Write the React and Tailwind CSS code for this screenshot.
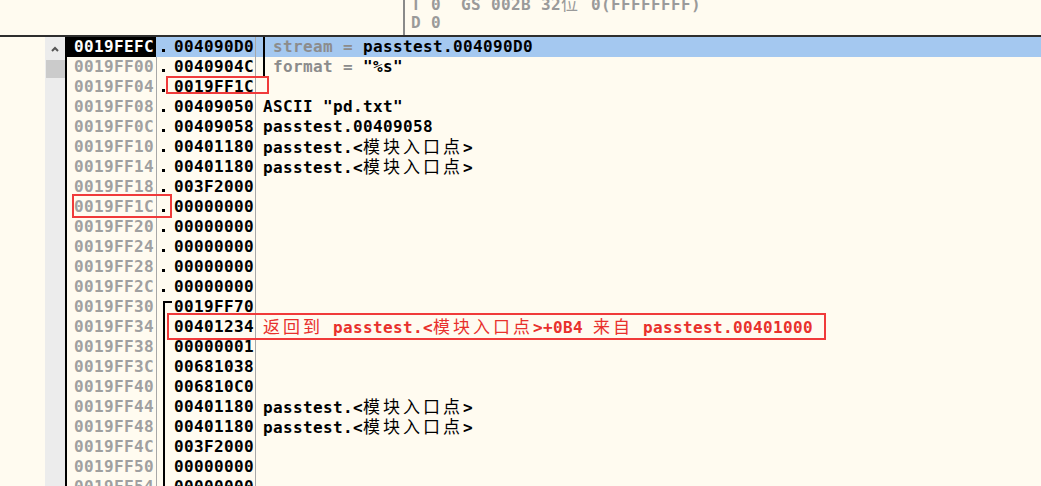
import React from 'react';

const rows = [
  { addr: '0019FEFC', val: '004090D0', mark: 'dot', sel: true, arg: true, label: 'stream = ', text: 'passtest.004090D0' },
  { addr: '0019FF00', val: '0040904C', mark: 'dot', arg: true, label: 'format = ', text: '"%s"' },
  { addr: '0019FF04', val: '0019FF1C', mark: 'dot' },
  { addr: '0019FF08', val: '00409050', mark: 'dot', text: 'ASCII "pd.txt"' },
  { addr: '0019FF0C', val: '00409058', mark: 'dot', text: 'passtest.00409058' },
  { addr: '0019FF10', val: '00401180', mark: 'dot', text: 'passtest.<模块入口点>' },
  { addr: '0019FF14', val: '00401180', mark: 'dot', text: 'passtest.<模块入口点>' },
  { addr: '0019FF18', val: '003F2000', mark: 'dot' },
  { addr: '0019FF1C', val: '00000000', mark: 'dot' },
  { addr: '0019FF20', val: '00000000', mark: 'dot' },
  { addr: '0019FF24', val: '00000000', mark: 'dot' },
  { addr: '0019FF28', val: '00000000', mark: 'dot' },
  { addr: '0019FF2C', val: '00000000', mark: 'dot' },
  { addr: '0019FF30', val: '0019FF70', mark: 'corner' },
  { addr: '0019FF34', val: '00401234', mark: 'line', red: true, text: '返回到 passtest.<模块入口点>+0B4 来自 passtest.00401000' },
  { addr: '0019FF38', val: '00000001', mark: 'line' },
  { addr: '0019FF3C', val: '00681038', mark: 'line' },
  { addr: '0019FF40', val: '006810C0', mark: 'line' },
  { addr: '0019FF44', val: '00401180', mark: 'line', text: 'passtest.<模块入口点>' },
  { addr: '0019FF48', val: '00401180', mark: 'line', text: 'passtest.<模块入口点>' },
  { addr: '0019FF4C', val: '003F2000', mark: 'line' },
  { addr: '0019FF50', val: '00000000', mark: 'line' },
  { addr: '0019FF54', val: '00000000', mark: 'line' },
];

// wrap runs of CJK so they get the wide 20px cell like the original
function Txt({ s }) {
  return s.split(/([\u4e00-\u9fff]+)/).map((part, i) =>
    /[\u4e00-\u9fff]/.test(part) ? (
      <span key={i} className="font-['Noto_Sans_CJK_SC',sans-serif] font-normal text-[17px] tracking-[3px]">
        {part}
      </span>
    ) : (
      part
    )
  );
}

function Marker({ type }) {
  if (type === 'dot') return <span className="ml-[5px] mt-[12px] w-[3px] h-[3px] bg-black" />;
  if (type === 'corner') return <div className="ml-[6px] mt-[4px] w-[9px] border-l-2 border-t-2 border-black" />;
  return <div className="ml-[6px] h-full border-l-2 border-black" />;
}

function Row({ r }) {
  return (
    <div className={`flex h-[20px] ${r.sel ? 'bg-[#a4c8f0]' : ''}`}>
      <div
        className={`w-[90px] shrink-0 pl-[7px] flex items-center border-r ${
          r.sel ? 'bg-black text-white border-[#a4c8f0]' : 'text-[#a0a0a0] border-[#a8a8a8]'
        }`}
      >
        {r.addr}
      </div>
      <div className="w-[99px] shrink-0 flex border-r border-[#a8a8a8]">
        <div className="w-[17px] h-full shrink-0 flex">
          <Marker type={r.mark} />
        </div>
        <div className="flex items-center text-black">{r.val}</div>
      </div>
      <div className={`flex-1 flex items-center whitespace-pre ${r.red ? 'text-[#e8302c]' : 'text-black'}`}>
        {r.arg ? (
          <>
            <div className="ml-[7px] w-[2px] h-full bg-black" />
            <span className="ml-[8px]">
              <span className="text-[#8c8c8c]">{r.label}</span>
              {r.text}
            </span>
          </>
        ) : (
          r.text && (
            <span className="ml-[7px]">
              <Txt s={r.text} />
            </span>
          )
        )}
      </div>
    </div>
  );
}

export default function App() {
  return (
    <div className="w-[1041px] h-[486px] overflow-hidden bg-[#fffbf0] font-['DejaVu_Sans_Mono',monospace] font-bold text-[16px] tracking-[0.37px] leading-[20px]">
      {/* register pane (bottom edge) */}
      <div className="h-[35px] flex overflow-hidden">
        <div className="w-[403px] shrink-0" />
        <div className="border-l-2 border-[#8a8a8a] pl-[6px] text-[#9a9a9a]">
          <div className="-mt-[7px] h-[20px] whitespace-pre">
            T 0  GS 002B 32<Txt s="位" /> 0(FFFFFFFF)
          </div>
          <div className="h-[20px]">D 0</div>
        </div>
      </div>
      <div className="h-[2px] bg-[#2e2e2e]" />

      {/* stack pane */}
      <div className="flex">
        <div className="w-[45px] shrink-0" />
        <div className="w-[20px] shrink-0 h-[449px] bg-[#ececec] flex flex-col items-center">
          <svg width="8" height="6" viewBox="0 0 8 6" className="mt-[9px]">
            <path d="M1 5 L4 2 L7 5" fill="none" stroke="#555" strokeWidth="2" />
          </svg>
          <div className="mt-[8px] w-[19px] h-[18px] bg-[#cbcbcb]" />
        </div>
        <div className="relative flex-1 border-l-2 border-black">
          {rows.map((r) => (
            <Row key={r.addr} r={r} />
          ))}

          {/* red annotation boxes */}
          <div className="absolute left-[99px] top-[39px] w-[103px] h-[18px] border-2 border-[#f03a3a]" />
          <div className="absolute left-[5px] top-[157px] w-[100px] h-[24px] border-2 border-[#f03a3a]" />
          <div className="absolute left-[100px] top-[276px] w-[659px] h-[27px] border-2 border-[#f03a3a]" />
        </div>
      </div>
    </div>
  );
}
